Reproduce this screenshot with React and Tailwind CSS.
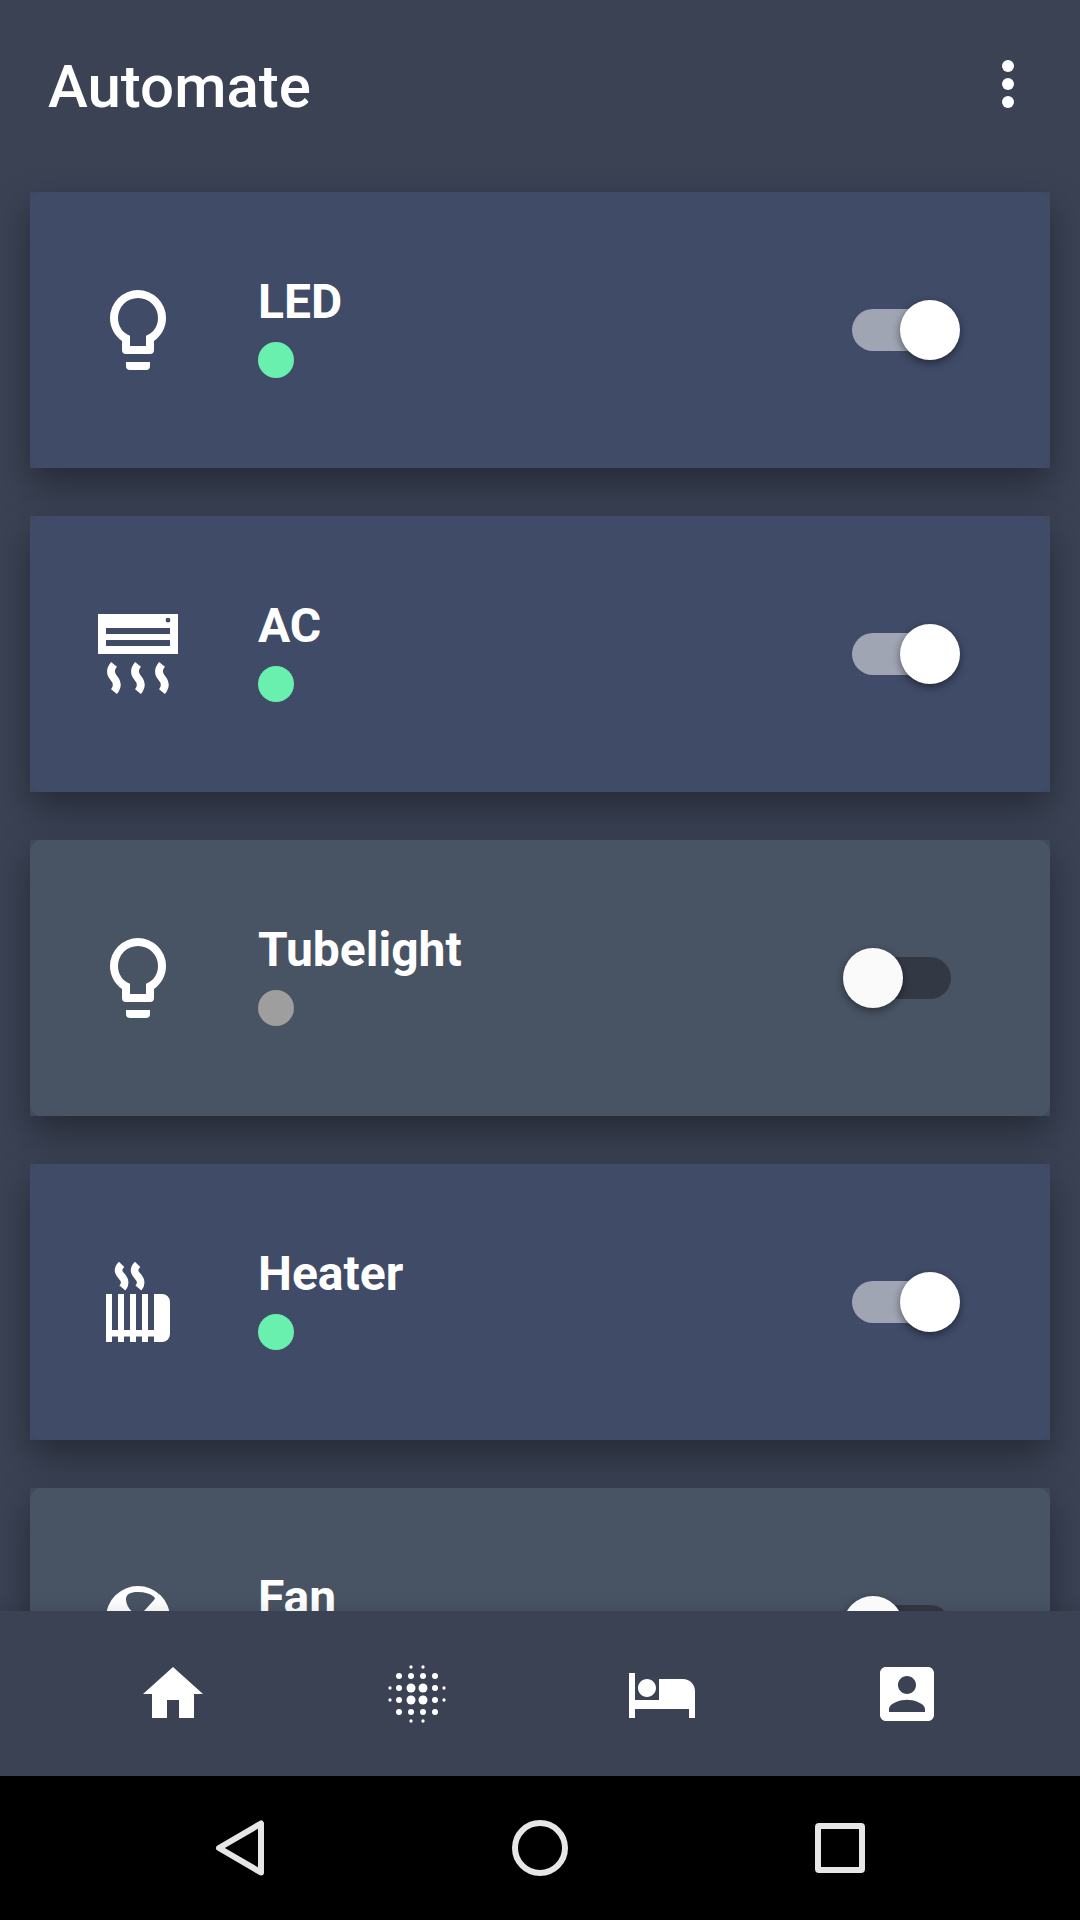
const BulbIcon = () => (
  <svg viewBox="0 0 24 24" className="size-24 fill-white">
    <path
      fillRule="evenodd"
      d="M12 2A7 7 0 0 0 5 9C5 11.38 6.19 13.47 8 14.74V17A1 1 0 0 0 9 18H15A1 1 0 0 0 16 17V14.74C17.81 13.47 19 11.38 19 9A7 7 0 0 0 12 2ZM12 4A5 5 0 0 1 17 9C17 11.05 15.81 12.83 14 13.42V16H10V13.42C8.19 12.83 7 11.05 7 9A5 5 0 0 1 12 4ZM9 21A1 1 0 0 0 10 22H14A1 1 0 0 0 15 21V20H9Z"
    />
  </svg>
);

const AcIcon = () => (
  <svg viewBox="0 0 24 24" className="size-24 fill-white">
    <path
      fillRule="evenodd"
      d="M2 2H22V12H2ZM4 5.5V7H20V5.5ZM4 8.5V10H20V8.5ZM19.5 2.95A.6.6 0 1 0 19.5 4.15A.6.6 0 1 0 19.5 2.95Z"
    />
    <path
      className="fill-none stroke-white"
      strokeWidth="1.9"
      d="M6 14.6C5 15.8 5 16.9 5.9 17.95C6.9 19.1 7 20.2 6 21.4M12 14.6C11 15.8 11 16.9 11.9 17.95C12.9 19.1 13 20.2 12 21.4M18 14.6C17 15.8 17 16.9 17.9 17.95C18.9 19.1 19 20.2 18 21.4"
    />
  </svg>
);

const HeaterIcon = () => (
  <svg viewBox="0 0 24 24" className="size-24 fill-white">
    <path d="M4 10H5.5V19H7V10H8.5V19H10V10H11.5V19H13V10H14.5V19H16V10H18A2 2 0 0 1 20 12V20A2 2 0 0 1 18 22H16V20.6H14.5V22H13V20.6H11.5V22H10V20.6H8.5V22H7V20.6H5.5V22H4Z" />
    <path
      className="fill-none stroke-white"
      strokeWidth="1.9"
      d="M7.9 2.6C6.9 3.6 6.9 4.5 7.8 5.4C8.8 6.5 9 7.4 8.1 8.5M11.9 2.6C10.9 3.6 10.9 4.5 11.8 5.4C12.8 6.5 13 7.4 12.1 8.5"
    />
  </svg>
);

const FanIcon = () => (
  <svg viewBox="0 0 24 24" className="size-24 fill-white">
    <path
      fillRule="evenodd"
      d="M12 2A8 8 0 0 0 4 10A8 8 0 0 0 11 17.93V20H8V22H16V20H13V17.93A8 8 0 0 0 20 10A8 8 0 0 0 12 2ZM12 3.5C13.7 3.5 15 3.9 15.9 4.6C16.3 4.9 16.3 5.2 16 5.5L13 8.8A1.5 1.5 0 0 0 11 8.8C9.8 7.9 9 6.6 9 5.3C9 4.1 10 3.5 12 3.5ZM5.6 11.4C5.4 10.2 6.4 9.5 7.5 9.6C9 9.6 9.8 9.8 10.5 10A1.5 1.5 0 0 0 11 11.2L9 15.6C7 15 5.8 13 5.6 11.4ZM12.6 11.4L17.8 11.2C18 14 15.5 16.2 13.5 16.2C11.5 16 11.7 13 12.6 11.4Z"
    />
  </svg>
);

const NAV = [
  { label: "Home", d: "M10 20v-6h4v6h5v-8h3L12 3 2 12h3v8z" },
  { label: "Scenes", dots: true },
  {
    label: "Rooms",
    d: "M7 13c1.66 0 3-1.34 3-3S8.66 7 7 7s-3 1.34-3 3 1.34 3 3 3zm12-6h-8v7H3V5H1v15h2v-3h18v3h2v-9c0-2.21-1.79-4-4-4z",
  },
  {
    label: "Account",
    d: "M3 5v14c0 1.1.89 2 2 2h14c1.1 0 2-.9 2-2V5c0-1.1-.9-2-2-2H5c-1.11 0-2 .9-2 2zm12 4c0 1.66-1.34 3-3 3s-3-1.34-3-3 1.34-3 3-3 3 1.34 3 3zm-9 8c0-2 4-3.1 6-3.1s6 1.1 6 3.1v1H6v-1z",
  },
];

const DOTS = [
  [10, 3, 0.55], [14, 3, 0.55],
  [6, 6, 1], [10, 6, 1], [14, 6, 1], [18, 6, 1],
  [3, 10, 0.55], [6, 10, 1], [10, 10, 1.5], [14, 10, 1.5], [18, 10, 1], [21, 10, 0.55],
  [3, 14, 0.55], [6, 14, 1], [10, 14, 1.5], [14, 14, 1.5], [18, 14, 1], [21, 14, 0.55],
  [6, 18, 1], [10, 18, 1], [14, 18, 1], [18, 18, 1],
  [10, 21, 0.55], [14, 21, 0.55],
];

function Toggle({ on }) {
  return on ? (
    <div className="mr-[90px] flex h-[60px] w-[108px] items-center">
      <div className="h-[42px] w-[102px] shrink-0 rounded-full bg-[#a0a5b4]" />
      <div className="relative -ml-[54px] size-[60px] shrink-0 rounded-full bg-white shadow-[0_3px_9px_rgba(0,0,0,0.45)]" />
    </div>
  ) : (
    <div className="mr-[99px] flex h-[60px] w-[108px] items-center">
      <div className="relative z-10 size-[60px] shrink-0 rounded-full bg-[#fafafa] shadow-[0_3px_9px_rgba(0,0,0,0.4)]" />
      <div className="-ml-[54px] h-[42px] w-[102px] shrink-0 rounded-full bg-[#333845]" />
    </div>
  );
}

function DeviceCard({ name, on, Icon }) {
  return (
    <div className="relative h-[276px] shrink-0 bg-[#404a5e] shadow-[0_16px_34px_rgba(0,0,0,0.36)]">
      <div
        className={
          on
            ? "flex h-full items-center rounded-xl bg-[#404b68]"
            : "flex h-full items-center rounded-xl bg-[#485364]"
        }
      >
        <div className="ml-[60px]">
          <Icon />
        </div>
        <div className="ml-[72px] flex h-full flex-1 flex-col pt-[82px]">
          <span className="text-[48px] leading-[56px] font-bold text-white">{name}</span>
          <span
            className={
              on
                ? "mt-3 size-9 rounded-full bg-[#69f0ae]"
                : "mt-3 size-9 rounded-full bg-[#9e9e9e]"
            }
          />
        </div>
        <Toggle on={on} />
      </div>
    </div>
  );
}

const DEVICES = [
  { name: "LED", on: true, Icon: BulbIcon },
  { name: "AC", on: true, Icon: AcIcon },
  { name: "Tubelight", on: false, Icon: BulbIcon },
  { name: "Heater", on: true, Icon: HeaterIcon },
  { name: "Fan", on: false, Icon: FanIcon },
];

export default function App() {
  return (
    <div className="flex h-[1920px] w-[1080px] flex-col overflow-hidden bg-[#3a4254] font-['Roboto',sans-serif]">
      <header className="flex h-[168px] shrink-0 items-center justify-between pr-[66px] pl-12">
        <h1 className="mt-[6px] text-[60px] leading-[70px] font-medium text-white">Automate</h1>
        <div className="flex flex-col gap-1.5">
          <span className="size-3 rounded-full bg-white" />
          <span className="size-3 rounded-full bg-white" />
          <span className="size-3 rounded-full bg-white" />
        </div>
      </header>

      <main className="flex h-[1443px] shrink-0 flex-col gap-12 overflow-hidden px-[30px] pt-6">
        {DEVICES.map((d) => (
          <DeviceCard key={d.name} {...d} />
        ))}
      </main>

      <nav className="relative flex h-[165px] shrink-0 items-center bg-[#3a4254] pr-[51px] pl-[50.2px] shadow-[0_0_18px_rgba(0,0,0,0.12)]">
        {NAV.map((item) => (
          <button key={item.label} aria-label={item.label} className="flex flex-1 justify-center">
            <svg viewBox="0 0 24 24" className="size-[72px] fill-white">
              {item.dots
                ? DOTS.map(([x, y, r]) => <circle key={`${x}-${y}`} cx={x} cy={y} r={r} />)
                : <path d={item.d} />}
            </svg>
          </button>
        ))}
      </nav>

      <footer className="relative flex h-36 shrink-0 items-center justify-center gap-[228px] bg-black">
        <svg viewBox="0 0 72 72" className="size-[72px] fill-none stroke-[#e6e6e6]" strokeWidth="6" strokeLinejoin="round">
          <path d="M57 11.5V60.5L15 36Z" />
        </svg>
        <svg viewBox="0 0 72 72" className="size-[72px] fill-none stroke-[#e6e6e6]" strokeWidth="6">
          <circle cx="36" cy="36" r="25" />
        </svg>
        <svg viewBox="0 0 72 72" className="size-[72px] fill-none stroke-[#e6e6e6]" strokeWidth="6" strokeLinejoin="round">
          <rect x="14" y="14" width="44" height="44" rx="1" />
        </svg>
      </footer>
    </div>
  );
}
